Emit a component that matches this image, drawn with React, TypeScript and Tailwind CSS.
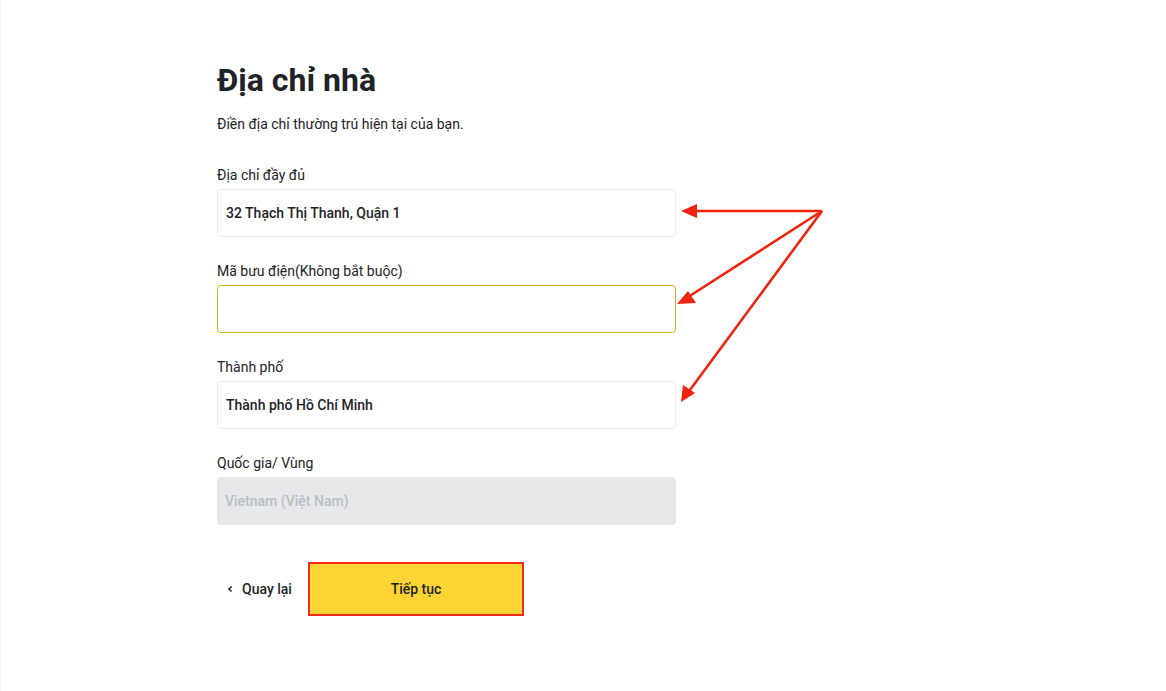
import React from "react";

function Field({ label, children }: { label: string; children: React.ReactNode }) {
  return (
    <div className="flex flex-col gap-1">
      <div className="text-sm leading-5 text-[#1e2329]">{label}</div>
      {children}
    </div>
  );
}

export default function App() {
  return (
    <div
      className="relative w-[1166px] h-[691px] bg-white border-l border-[#f3f3f3] overflow-hidden"
      style={{ fontFamily: 'Roboto, "Liberation Sans", sans-serif' }}
    >
      <div className="ml-[216px] pt-[58px] w-[459px] flex flex-col">
        <h1 className="text-[32px] leading-[44px] font-bold text-[#1e2329]">Địa chỉ nhà</h1>
        <p className="mt-[12px] text-sm leading-5 text-[#1e2329]">Điền địa chỉ thường trú hiện tại của bạn.</p>
        <div className="mt-[31px] flex flex-col gap-6">
          <Field label="Địa chỉ đầy đủ">
            <div className="h-12 rounded border border-[#eaecef] px-[8px] flex items-center text-sm font-medium text-[#1e2329]">
              32 Thạch Thị Thanh, Quận 1
            </div>
          </Field>
          <Field label="Mã bưu điện(Không bắt buộc)">
            <div className="h-12 rounded border border-[#d8b41a] px-[8px] flex items-center text-sm font-medium text-[#1e2329]"></div>
          </Field>
          <Field label="Thành phố">
            <div className="h-12 rounded border border-[#eaecef] px-[8px] flex items-center text-sm font-medium text-[#1e2329]">
              Thành phố Hồ Chí Minh
            </div>
          </Field>
          <Field label="Quốc gia/ Vùng">
            <div className="h-12 rounded bg-[#e6e8ea] px-[8px] flex items-center text-sm font-medium text-[#b7bdc6]">
              Vietnam (Việt Nam)
            </div>
          </Field>
        </div>
        <div className="mt-[37px] flex items-center">
          <div className="w-[91px] flex items-center gap-[8px] pl-[9px] text-sm font-medium text-[#1e2329]">
            <svg width="8" height="8" viewBox="0 0 8 8" fill="none">
              <path d="M5.5 1.5 L3 4 L5.5 6.5" stroke="#1e2329" strokeWidth="1.6" />
            </svg>
            <span>Quay lại</span>
          </div>
          <div className="w-[216px] h-[54px] border-2 border-[#f22b1a] bg-[#fcd535] flex items-center justify-center text-sm font-medium text-[#1e2329]">
            Tiếp tục
          </div>
        </div>
      </div>
      <svg className="absolute left-0 top-0" width="1166" height="691" viewBox="0 0 1166 691">
        <g stroke="#f2230e" strokeWidth="2.6" fill="none">
          <line x1="821" y1="211" x2="688" y2="211" />
          <line x1="821" y1="211" x2="684" y2="299" />
          <line x1="821" y1="211" x2="686" y2="394" />
        </g>
        <g fill="#f2230e">
          <polygon points="680,211 696,204 696,218" />
          <polygon points="676,304 687,291 695,303" />
          <polygon points="680,402 682,385 694,393" />
        </g>
      </svg>
    </div>
  );
}
